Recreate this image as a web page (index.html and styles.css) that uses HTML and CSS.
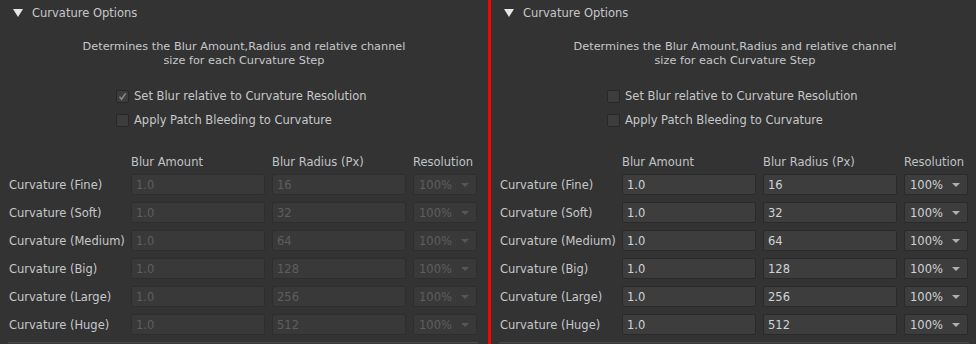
FILE: index.html
```html
<!DOCTYPE html>
<html>
<head>
<meta charset="utf-8">
<link rel="stylesheet" href="styles.css">
</head>
<body>
<div class="split">
  <section class="panel panel-left">
    <div class="head"><span class="tri"></span><span class="title">Curvature Options</span></div>
    <p class="desc">Determines the Blur Amount,Radius and relative channel<br>size for each Curvature Step</p>
    <div class="checks">
      <label class="check"><span class="box checked disabled"><svg viewBox="0 0 13 13" width="13" height="13"><path d="M3.5 6.8 L5.6 9.2 L9.6 3.4" fill="none" stroke="#8a8a8a" stroke-width="1.6"/></svg></span>Set Blur relative to Curvature Resolution</label>
      <label class="check"><span class="box"></span>Apply Patch Bleeding to Curvature</label>
    </div>
    <div class="grid">
      <div class="hcell"></div><div class="hcell">Blur Amount</div><div class="hcell">Blur Radius (Px)</div><div class="hcell">Resolution</div>
      <div class="lbl">Curvature (Fine)</div><div class="inp dis">1.0</div><div class="inp dis">16</div><div class="sel dis">100%<span class="arr"></span></div>
      <div class="lbl">Curvature (Soft)</div><div class="inp dis">1.0</div><div class="inp dis">32</div><div class="sel dis">100%<span class="arr"></span></div>
      <div class="lbl">Curvature (Medium)</div><div class="inp dis">1.0</div><div class="inp dis">64</div><div class="sel dis">100%<span class="arr"></span></div>
      <div class="lbl">Curvature (Big)</div><div class="inp dis">1.0</div><div class="inp dis">128</div><div class="sel dis">100%<span class="arr"></span></div>
      <div class="lbl">Curvature (Large)</div><div class="inp dis">1.0</div><div class="inp dis">256</div><div class="sel dis">100%<span class="arr"></span></div>
      <div class="lbl">Curvature (Huge)</div><div class="inp dis">1.0</div><div class="inp dis">512</div><div class="sel dis">100%<span class="arr"></span></div>
    </div>
    <div class="next"></div>
  </section>
  <div class="divider"></div>
  <section class="panel panel-right">
    <div class="head"><span class="tri"></span><span class="title">Curvature Options</span></div>
    <p class="desc">Determines the Blur Amount,Radius and relative channel<br>size for each Curvature Step</p>
    <div class="checks">
      <label class="check"><span class="box"></span>Set Blur relative to Curvature Resolution</label>
      <label class="check"><span class="box"></span>Apply Patch Bleeding to Curvature</label>
    </div>
    <div class="grid">
      <div class="hcell"></div><div class="hcell">Blur Amount</div><div class="hcell">Blur Radius (Px)</div><div class="hcell">Resolution</div>
      <div class="lbl">Curvature (Fine)</div><div class="inp">1.0</div><div class="inp">16</div><div class="sel">100%<span class="arr"></span></div>
      <div class="lbl">Curvature (Soft)</div><div class="inp">1.0</div><div class="inp">32</div><div class="sel">100%<span class="arr"></span></div>
      <div class="lbl">Curvature (Medium)</div><div class="inp">1.0</div><div class="inp">64</div><div class="sel">100%<span class="arr"></span></div>
      <div class="lbl">Curvature (Big)</div><div class="inp">1.0</div><div class="inp">128</div><div class="sel">100%<span class="arr"></span></div>
      <div class="lbl">Curvature (Large)</div><div class="inp">1.0</div><div class="inp">256</div><div class="sel">100%<span class="arr"></span></div>
      <div class="lbl">Curvature (Huge)</div><div class="inp">1.0</div><div class="inp">512</div><div class="sel">100%<span class="arr"></span></div>
    </div>
    <div class="next"></div>
  </section>
</div>
</body>
</html>
```
FILE: styles.css
```css
html, body {
  margin: 0;
  padding: 0;
  background: #333333;
}
body {
  width: 976px;
  height: 344px;
  overflow: hidden;
  font-family: "DejaVu Sans", Verdana, sans-serif;
  font-size: 11.5px;
  color: #c6c8ca;
}
.split {
  display: flex;
  height: 344px;
}
.panel {
  height: 344px;
  overflow: hidden;
}
.panel-left { width: 488px; }
.panel-right { width: 485px; }
.divider {
  width: 3px;
  background: #ff0000;
}
.head {
  display: flex;
  align-items: center;
  height: 26px;
  padding-left: 13px;
}
.tri {
  width: 0;
  height: 0;
  border-left: 5px solid transparent;
  border-right: 5px solid transparent;
  border-top: 8px solid #e6e6e6;
  margin-right: 9px;
}
.title { font-size: 11.5px; }
.desc {
  margin: 14px 0 0;
  width: 488px;
  text-align: center;
  line-height: 14px;
  font-size: 11.3px;
}
.checks {
  margin-top: 16px;
  padding-left: 116px;
  display: flex;
  flex-direction: column;
}
.check {
  display: flex;
  align-items: center;
  height: 24px;
}
.box {
  width: 11px;
  height: 11px;
  border: 1px solid #272727;
  border-radius: 2px;
  background: #3d3d3d;
  margin-right: 5px;
  position: relative;
}
.box svg {
  position: absolute;
  left: -1px;
  top: -1px;
}
.grid {
  margin-top: 18px;
  padding-left: 9px;
  display: grid;
  grid-template-columns: 115px 134px 134px 64px;
  column-gap: 7px;
  row-gap: 7px;
  grid-auto-rows: 21px;
  grid-template-rows: 17px;
}
.hcell {
  line-height: 24px;
  color: #c0c4c8;
  white-space: nowrap;
}
.lbl {
  line-height: 22px;
  white-space: nowrap;
}
.inp, .sel {
  box-sizing: border-box;
  height: 21px;
  line-height: 20px;
  border: 1px solid #2a2a2a;
  border-radius: 2px;
  background: #3d3d3d;
  padding-left: 4px;
  color: #d0d4d8;
}
.inp.dis, .sel.dis {
  background: #393939;
  border-color: #2e2e2e;
  color: #5e5e5e;
}
.sel {
  position: relative;
  padding-left: 5px;
}
.arr {
  position: absolute;
  right: 7px;
  top: 8px;
  width: 0;
  height: 0;
  border-left: 4px solid transparent;
  border-right: 4px solid transparent;
  border-top: 4px solid #b0b0b0;
}
.sel.dis .arr { border-top-color: #575757; }
.next {
  margin: 7px 0 0 8px;
  width: 470px;
  height: 10px;
  background: #3a3a3a;
  border-top: 1px solid #484848;
}
```
